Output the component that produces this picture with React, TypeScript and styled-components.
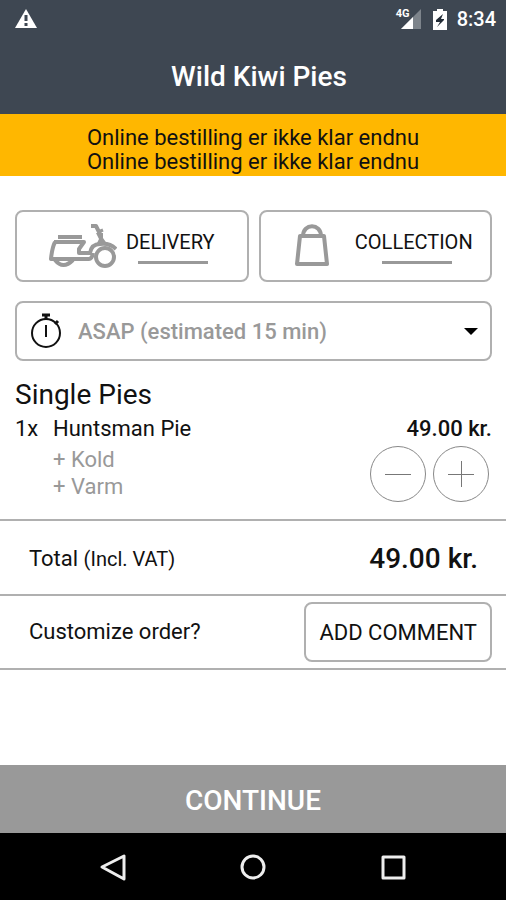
import React from "react";
import styled, { createGlobalStyle } from "styled-components";

const GlobalStyle = createGlobalStyle`
  *, *::before, *::after { box-sizing: border-box; }
  body { margin: 0; background: #fff; }
  body, button, select { font-family: Roboto, "Liberation Sans", sans-serif; }
  button { padding: 0; border: 0; background: none; color: inherit; cursor: pointer; }
  svg { display: block; flex: none; }
`;

const Page = styled.div`
  min-height: 100vh;
  display: flex;
  flex-direction: column;
  background: #fff;
  color: #111;
  font-size: 22px;
  line-height: 26px;
`;

const Header = styled.header`
  background: #3e4752;
  color: #fff;
`;

const StatusBar = styled.div`
  height: 38px;
  padding: 0 10px 0 15px;
  display: flex;
  align-items: center;
  justify-content: space-between;
`;

const StatusGroup = styled.div`
  display: flex;
  align-items: center;
  gap: 10px;
`;

const Signal = styled.span`
  position: relative;
  display: block;
  padding: 0 2px 0 5px;
`;

const Network = styled.span`
  position: absolute;
  left: 0;
  top: 0;
  font-size: 11px;
  line-height: 10px;
  font-weight: 700;
`;

const Clock = styled.span`
  font-size: 20px;
  font-weight: 500;
`;

const Title = styled.h1`
  margin: 0;
  padding: 22px 16px 20px 28px;
  text-align: center;
  font-size: 28px;
  line-height: 34px;
  font-weight: 500;
`;

const Banner = styled.div`
  padding: 12px 16px 2px;
  background: #ffb700;
  text-align: center;
  line-height: 24px;
`;

const Notice = styled.p`
  margin: 0;
`;

const Main = styled.main`
  flex: 1;
  padding-top: 34px;
`;

const Methods = styled.div`
  display: grid;
  grid-template-columns: 1fr 1fr;
  gap: 10px;
  padding: 0 14px 0 15px;
`;

const MethodButton = styled.button`
  height: 72px;
  display: flex;
  align-items: center;
  justify-content: center;
  gap: 9px;
  border: 2px solid #b0b0b0;
  border-radius: 8px;
  font-size: 20px;
  line-height: 24px;
`;

const MethodIcon = styled.svg`
  width: 68px;
  height: 46px;
  fill: none;
  stroke: #999;
  stroke-width: 4;
  stroke-linejoin: round;
`;

const MethodLabel = styled.span`
  display: flex;
  flex-direction: column;
  align-items: center;
  gap: 7px;
  padding-top: 11px;
  height: 54px;
  &::after {
    content: "";
    width: 70px;
    height: 3px;
    margin-left: 6px;
    background: #999;
  }
`;

const TimeField = styled.label`
  position: relative;
  display: block;
  margin: 19px 14px 0 15px;
`;

const TimeSelect = styled.select`
  display: block;
  width: 100%;
  height: 60px;
  padding: 0 48px 0 61px;
  appearance: none;
  border: 2px solid #b0b0b0;
  border-radius: 8px;
  background: transparent;
  color: #999;
  font-size: 22px;
  font-weight: 500;
`;

const FieldIcon = styled.span<{ $side: "left" | "right" }>`
  position: absolute;
  top: 0;
  bottom: 0;
  ${(p) => p.$side}: 14px;
  display: flex;
  align-items: center;
  pointer-events: none;
`;

const Order = styled.section`
  padding: 17px 14px 17px 15px;
`;

const Category = styled.h2`
  margin: 0;
  font-size: 28px;
  line-height: 34px;
  font-weight: 400;
`;

const Item = styled.div`
  display: grid;
  grid-template-columns: 38px 1fr auto;
  padding-top: 4px;
`;

const Price = styled.strong`
  text-align: right;
  font-weight: 500;
`;

const Extras = styled.ul`
  grid-column: 2;
  margin: 0;
  padding: 4px 0 0;
  list-style: none;
  line-height: 27px;
  color: #999;
`;

const Stepper = styled.div`
  display: flex;
  gap: 7px;
  padding: 4px 3px 0 0;
`;

const StepButton = styled.button`
  width: 56px;
  height: 56px;
  display: grid;
  place-items: center;
  border: 1px solid #888;
  border-radius: 50%;
`;

const SummaryRow = styled.div<{ $inset: number }>`
  display: flex;
  align-items: center;
  justify-content: space-between;
  height: 75px;
  padding: 2px ${(p) => p.$inset}px 0 29px;
  border-top: 2px solid #b0b0b0;
  &:last-child {
    height: 76px;
    padding-top: 0;
    border-bottom: 2px solid #b0b0b0;
  }
`;

const Small = styled.small`
  font-size: 20px;
`;

const Total = styled.strong`
  font-size: 28px;
  font-weight: 500;
`;

const CommentButton = styled.button`
  height: 60px;
  padding: 0 13px;
  border: 2px solid #b0b0b0;
  border-radius: 8px;
  font-size: 22px;
`;

const ContinueButton = styled.button`
  height: 68px;
  padding-top: 2px;
  background: #999;
  color: #fff;
  font-size: 28px;
  font-weight: 500;
`;

const NavBar = styled.nav`
  height: 67px;
  padding: 0 43px;
  display: grid;
  grid-template-columns: repeat(3, 1fr);
  background: #000;
`;

const NavButton = styled.button`
  display: grid;
  place-items: center;
`;

const NavIcon = styled.svg`
  width: 28px;
  height: 28px;
  fill: none;
  stroke: #eee;
  stroke-width: 3;
  stroke-linejoin: round;
`;

function Scooter() {
  return (
    <MethodIcon viewBox="0 0 68 46" aria-hidden="true">
      <path d="M9 14H33" />
      <path d="M5 19H35L30 26V30H41C42 24 46 21 51 21C58 20 63 22 67 26M6 19Q3 25 2 36H40Q43 36 44 30" />
      <path d="M6 37Q14 47 24 37" />
      <circle cx="56" cy="34" r="9" />
      <path d="M42 3H47L51 11" />
      <path d="M49 9L54 7" strokeWidth="3" />
      <path d="M47 10H54V15L59 22H47L50 16Z" fill="#999" stroke="none" />
    </MethodIcon>
  );
}

function Bag() {
  return (
    <MethodIcon viewBox="0 0 68 46" aria-hidden="true">
      <path d="M22 13H46L49 41H19Z" />
      <path d="M25 13C25 0 43 0 43 13" />
    </MethodIcon>
  );
}

export default function App() {
  return (
    <Page>
      <GlobalStyle />
      <Header>
        <StatusBar>
          <svg width="22" height="20" viewBox="0 0 22 20" role="img" aria-label="Warning">
            <path d="M11 0L22 19H0Z" fill="#fff" />
            <path d="M11 6V12M11 14V17" stroke="#3e4752" strokeWidth="3" />
          </svg>
          <StatusGroup>
            <Signal>
              <svg width="20" height="20" viewBox="0 0 20 20" role="img" aria-label="Signal">
                <path d="M20 0V20H0L12 8Z" fill="#7d848b" />
                <path d="M12 8V20H0Z" fill="#fff" />
              </svg>
              <Network>4G</Network>
            </Signal>
            <svg width="14" height="21" viewBox="0 0 14 21" role="img" aria-label="Battery charging">
              <path d="M4 0H10V2H14V21H0V2H4Z" fill="#fff" />
              <path d="M10 5L3 11V13H7L4 18L11 11V10H8Z" fill="#222b36" />
            </svg>
            <Clock>8:34</Clock>
          </StatusGroup>
        </StatusBar>
        <Title>Wild Kiwi Pies</Title>
      </Header>
      <Banner>
        <Notice>Online bestilling er ikke klar endnu</Notice>
        <Notice>Online bestilling er ikke klar endnu</Notice>
      </Banner>
      <Main>
        <Methods>
          <MethodButton type="button">
            <Scooter />
            <MethodLabel>DELIVERY</MethodLabel>
          </MethodButton>
          <MethodButton type="button">
            <Bag />
            <MethodLabel>COLLECTION</MethodLabel>
          </MethodButton>
        </Methods>
        <TimeField>
          <TimeSelect aria-label="Order time" defaultValue="asap">
            <option value="asap">ASAP (estimated 15 min)</option>
          </TimeSelect>
          <FieldIcon $side="left">
            <svg width="34" height="36" viewBox="0 0 34 36" fill="none" stroke="#111" strokeWidth="2">
              <circle cx="17" cy="20" r="14" />
              <path d="M13 2H21M17 2V6M26 11L29 8" strokeWidth="3" />
              <path d="M17 12V24" />
            </svg>
          </FieldIcon>
          <FieldIcon $side="right">
            <svg width="14" height="7" viewBox="0 0 14 7">
              <path d="M0 0H14L7 7Z" fill="#000" />
            </svg>
          </FieldIcon>
        </TimeField>
        <Order>
          <Category>Single Pies</Category>
          <Item>
            <span>1x</span>
            <span>Huntsman Pie</span>
            <Price>49.00 kr.</Price>
            <Extras>
              <li>+ Kold</li>
              <li>+ Varm</li>
            </Extras>
            <Stepper>
              <StepButton type="button" aria-label="Remove one">
                <svg width="26" height="26" viewBox="0 0 26 26" stroke="#777">
                  <path d="M0 13.5H26" />
                </svg>
              </StepButton>
              <StepButton type="button" aria-label="Add one">
                <svg width="26" height="26" viewBox="0 0 26 26" stroke="#777">
                  <path d="M0 13.5H26M13.5 0V26" />
                </svg>
              </StepButton>
            </Stepper>
          </Item>
        </Order>
        <SummaryRow $inset={28}>
          <span>
            Total <Small>(Incl. VAT)</Small>
          </span>
          <Total>49.00 kr.</Total>
        </SummaryRow>
        <SummaryRow $inset={14}>
          <span>Customize order?</span>
          <CommentButton type="button">ADD COMMENT</CommentButton>
        </SummaryRow>
      </Main>
      <ContinueButton type="button">CONTINUE</ContinueButton>
      <NavBar>
        <NavButton type="button" aria-label="Back">
          <NavIcon viewBox="0 0 28 28">
            <path d="M25 3V26L3 14Z" />
          </NavIcon>
        </NavButton>
        <NavButton type="button" aria-label="Home">
          <NavIcon viewBox="0 0 28 28">
            <circle cx="14" cy="14" r="11" />
          </NavIcon>
        </NavButton>
        <NavButton type="button" aria-label="Recent apps">
          <NavIcon viewBox="0 0 28 28">
            <rect x="4" y="4" width="21" height="21" />
          </NavIcon>
        </NavButton>
      </NavBar>
    </Page>
  );
}
